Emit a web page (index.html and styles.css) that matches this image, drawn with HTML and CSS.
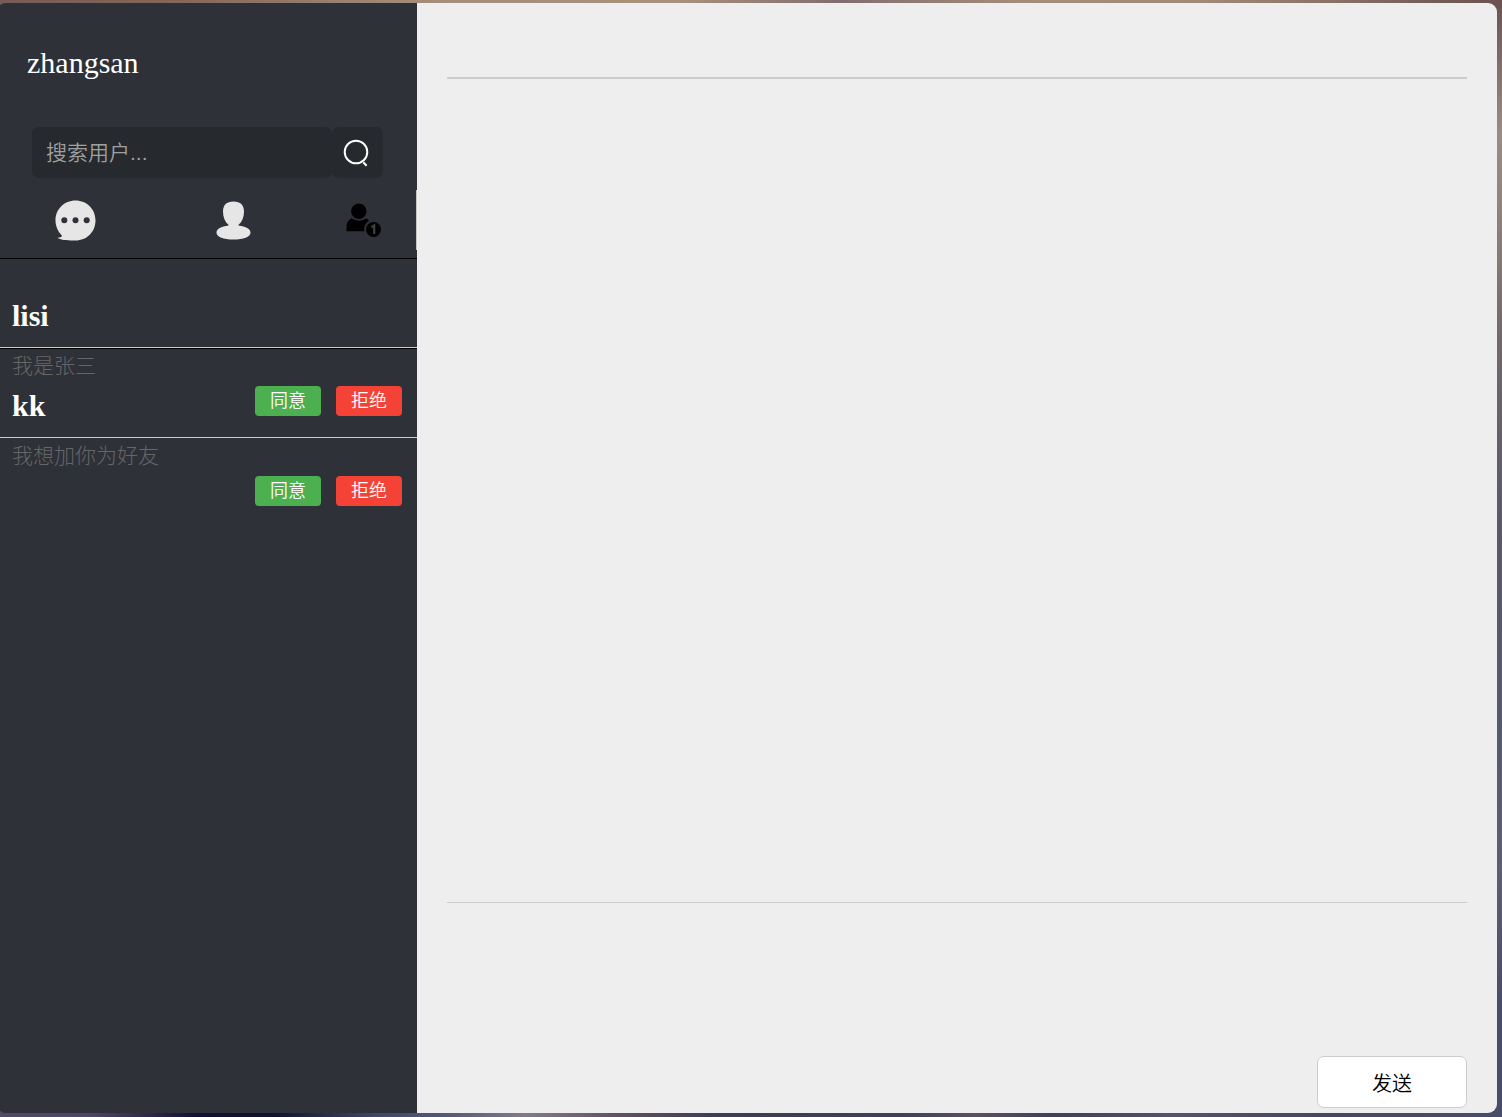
FILE: index.html
```
<!DOCTYPE html>
<html lang="zh-CN">
<head>
    <meta charset="UTF-8">
    <title>聊天</title>
    <link rel="stylesheet" href="styles.css">
</head>
<body>

<div class="main">
    <div class="panel">
        <div class="header">
            <span class="display-name">zhangsan</span>
        </div>

        <div class="search-bar">
            <input type="text" class="search-input" placeholder="搜索用户...">
            <button class="search-btn">
                <svg width="30" height="30" viewBox="0 0 30 30" fill="none" stroke="#fff" stroke-width="2">
                    <circle cx="15" cy="15" r="11.3"/>
                    <path d="M22.300 25.200l3.300 3.500"/>
                </svg>
            </button>
        </div>

        <div class="tabs">
            <div class="tab tab-chat">
                <svg width="42" height="42" viewBox="-0.5 0.5 42 42">
                    <path fill="#e6e6e6" d="M21 1C9.800 1 1 9.700 1 21c0 6 2.600 11 6.500 15.200-.2 1.500-2.500 1.500-4.500 2.300 5 2.500 12 2.500 18 2.500 11.300 0 20-8.700 20-20S32.300 1 21 1z"/>
                    <g fill="#2e3138">
                        <circle cx="9.800" cy="20.800" r="3"/>
                        <circle cx="21" cy="20.800" r="3"/>
                        <circle cx="32.200" cy="20.800" r="3"/>
                    </g>
                </svg>
            </div>
            <div class="tab tab-friend">
                <svg width="36" height="40" viewBox="-0.5 0.5 36 40">
                    <path fill="#e6e6e6" d="M18 1C11 1 7.500 4.500 7.500 11c0 6 2 10.500 5.500 13.300v.8C5.500 26 1 28.600 1 32c0 4.800 7 7 17 7s17-2.200 17-7c0-3.400-4.500-6-12-6.900v-.8c3.500-2.800 5.500-7.300 5.500-13.300C28.500 4.500 25 1 18 1z"/>
                </svg>
            </div>
            <div class="tab tab-request">
                <svg width="36" height="36" viewBox="0 0 36 36">
                    <circle cx="12.800" cy="8.200" r="7.700"/>
                    <path d="M5.500 15.200c4.500 3.300 10.500 3.300 15 0l2.500 2.700c-3.800 1.800-5.500 6-4.500 10.300H.5v-5c0-3.500 2-6.500 5-8z"/>
                    <circle cx="27.500" cy="26.500" r="7.500"/>
                    <path d="M25.500 24.200l2.700-1.700v8.500" fill="none" stroke="#3d4046" stroke-width="2.200"/>
                </svg>
            </div>
        </div>

        <div class="request-list">
            <div class="request">
                <div class="nickname">lisi</div>
                <div class="remark">我是张三</div>
                <div class="actions">
                    <button class="accept">同意</button>
                    <button class="reject">拒绝</button>
                </div>
            </div>
            <div class="request">
                <div class="nickname">kk</div>
                <div class="remark">我想加你为好友</div>
                <div class="actions">
                    <button class="accept">同意</button>
                    <button class="reject">拒绝</button>
                </div>
            </div>
        </div>
    </div>

    <div class="chat">
        <div class="chat-title"></div>
        <div class="chat-content"></div>
        <div class="chat-editor" contenteditable="true"></div>
        <div class="chat-action">
            <button class="send-btn">发送</button>
        </div>
    </div>
</div>

</body>
</html>
```
FILE: styles.css
```
* {
    box-sizing: border-box;
    margin: 0;
    padding: 0;
}

body {
    height: 1117px;
    padding-top: 3px;
    overflow: hidden;
    font-family: "Liberation Serif", "Noto Sans CJK SC", serif;
    background:
        linear-gradient(to right, #775b55, #846758 12%, #a58d7a 28%, #a9917c 45%, #806d70 56%, #a58d7a 68%, #a28978 80%, #755f5a 95%, #6c5151) top / 100% 8px no-repeat,
        linear-gradient(to right, #4f4a68, #4e4566 6%, #14103a 13%, #10102f 18%, #40456a 25%, #575a78 30%, #827a8b 35%, #615263 41%, #3c3c55 48%, #3f405b 60%, #5b5062 65%, #3f4059 70%, #58516a 78%, #464764 88%, #4a4c6b) bottom / 100% 8px no-repeat,
        linear-gradient(to bottom, #6c5151, #9b8c83 12%, #8c8179 20%, #72696c 30%, #5a5868 47%, #555970 65%, #5d5e73 78%, #4a4c6b 90%, #4a4c6b);
}

button {
    border: none;
    font-family: inherit;
    cursor: pointer;
}

.main {
    display: flex;
    width: 1500px;
    height: 1110px;
    margin-left: -3px;
    border-radius: 9px;
    overflow: hidden;
}

/* left panel */
.panel {
    width: 420px;
    height: 100%;
    background-color: #2e3138;
}

.header {
    height: 124px;
    padding: 43px 30px 0;
}

.display-name {
    color: #fff;
    font-size: 30px;
    line-height: 34px;
}

.search-bar {
    display: flex;
    height: 51px;
    margin: 0 34px 0 35px;
}

.search-input {
    width: 300px;
    padding: 0 14px;
    border: none;
    border-radius: 7px;
    outline: none;
    background-color: #26292e;
    color: #fff;
    font: 350 21px "Liberation Sans", "Noto Sans CJK SC", sans-serif;
}

.search-input::placeholder {
    color: #a0a0a0;
}

.search-btn {
    display: flex;
    align-items: center;
    justify-content: center;
    width: 51px;
    padding: 0 3px 2px 0;
    border-radius: 7px;
    background-color: #26292e;
}

.tabs {
    display: flex;
    justify-content: space-between;
    align-items: center;
    height: 60px;
    margin: 12px 0 8px;
    padding-left: 57px;
}

.tab {
    display: flex;
    align-items: center;
    height: 60px;
}

.tab svg {
    margin-top: 2px;
}

.tab-request {
    padding-right: 34px;
    border-right: 1px solid #c9c5c1;
}

.tab-friend {
    padding-left: 24px;
}

/* remark and buttons hang over the next row */
.request {
    height: 90px;
    padding-top: 40px;
    border-top: 1px solid #000;
    border-bottom: 1px solid #ccc;
}

.nickname {
    height: 55px;
    padding-left: 15px;
    color: #fff;
    font-size: 30px;
    font-weight: bold;
    line-height: 34px;
}

.remark {
    height: 32px;
    padding-left: 15px;
    color: #666;
    font-size: 21px;
    font-weight: 300;
    line-height: 24px;
}

.actions {
    display: flex;
    justify-content: flex-end;
    gap: 15px;
    padding-right: 15px;
}

.actions button {
    width: 66px;
    height: 30px;
    border-radius: 4px;
    color: #fff;
    font-size: 18px;
    font-weight: 350;
    line-height: 30px;
}

.accept {
    background-color: #4caf50;
}

.reject {
    background-color: #f44336;
}

/* chat area */
.chat {
    display: flex;
    flex: 1;
    flex-direction: column;
    padding: 0 30px 5px;
    background-color: #eee;
}

.chat-title {
    height: 76px;
    border-bottom: 2px solid #ccc;
}

.chat-content {
    flex: 1;
}

.chat-editor {
    height: 154px;
    border-top: 1px solid #ccc;
    outline: none;
}

.chat-action {
    display: flex;
    justify-content: flex-end;
}

.send-btn {
    width: 150px;
    height: 52px;
    border: 1px solid #ccc;
    border-radius: 7px;
    background-color: #fff;
    color: #000;
    font-family: "Noto Sans CJK SC", sans-serif;
    font-size: 20px;
    font-weight: 350;
}
```
